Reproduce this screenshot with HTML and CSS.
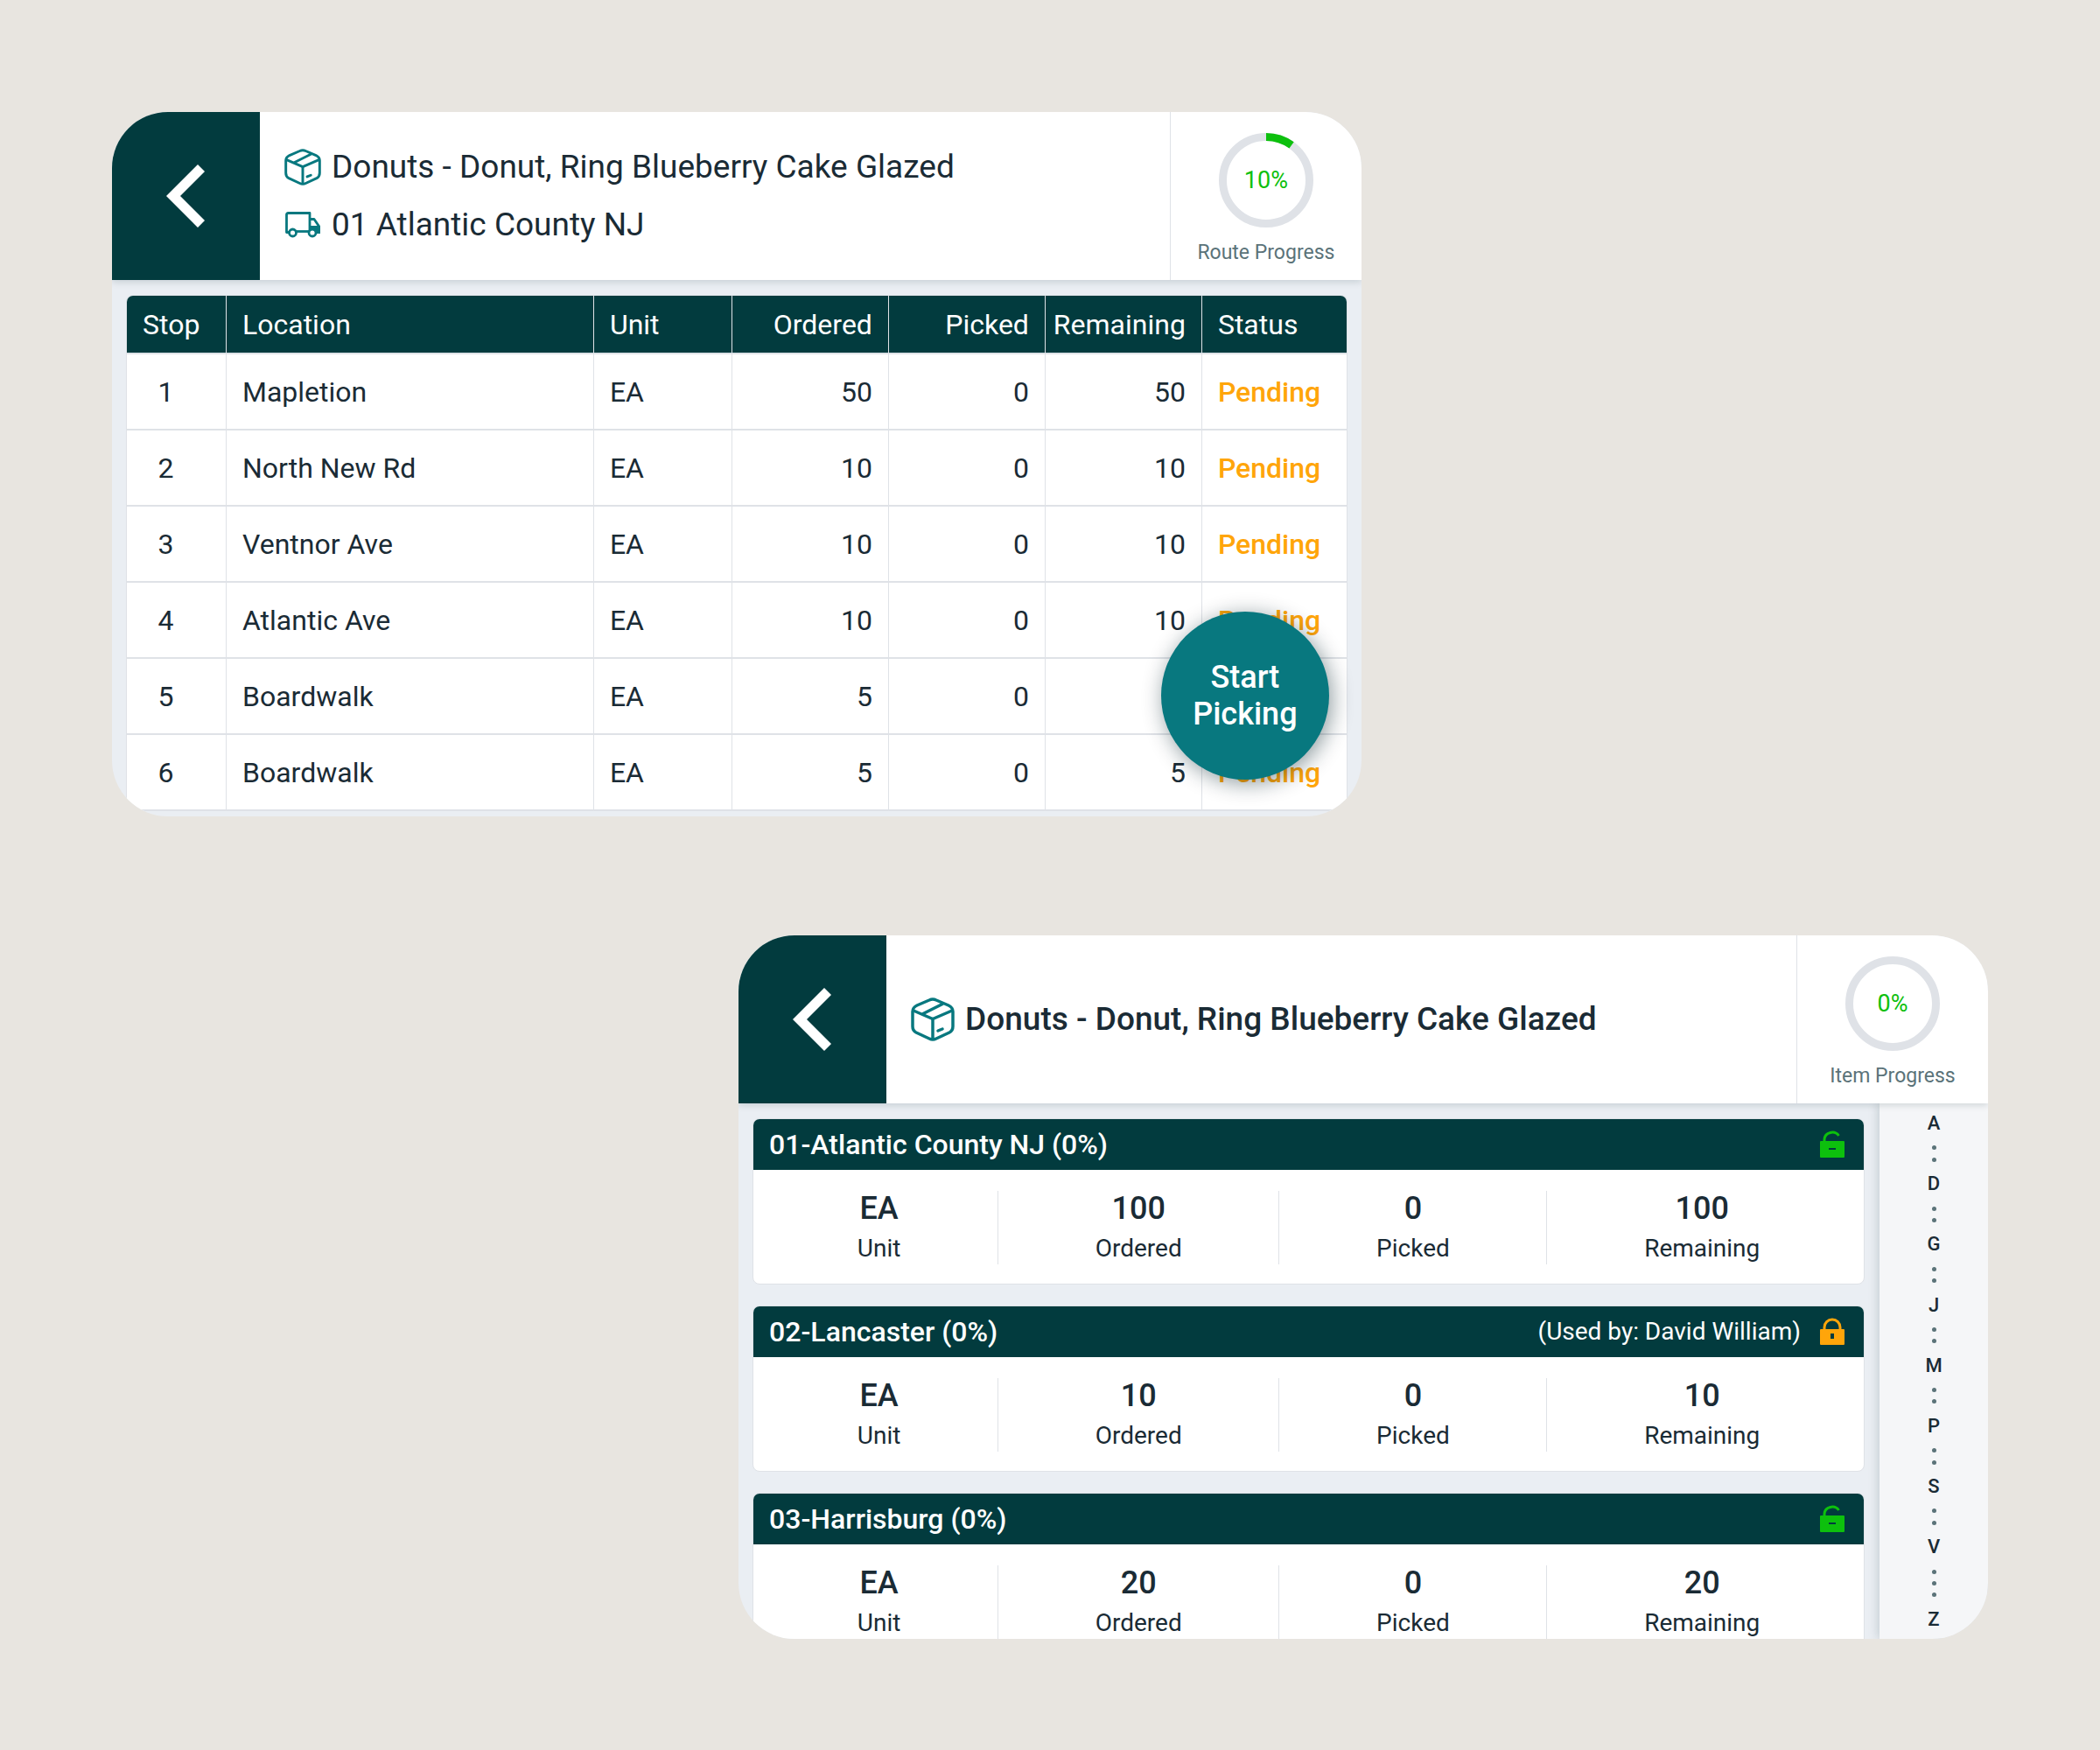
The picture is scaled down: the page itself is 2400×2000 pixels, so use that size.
FILE: index.html
```html
<!DOCTYPE html>
<html lang="en">
<head>
<meta charset="utf-8">
<meta name="viewport" content="width=device-width, initial-scale=1">
<title>Route Picking</title>
<link rel="stylesheet" href="styles.css">
</head>
<body>
<svg class="sprite" aria-hidden="true">
  <symbol id="icon-back" viewBox="0 0 46 74">
    <path d="M37 1 L45 9 L17 37 L45 65 L37 73 L1 37 Z" fill="currentColor"/>
  </symbol>
  <symbol id="icon-box" viewBox="0 0 50 50">
    <g fill="none" stroke="currentColor" stroke-width="3.500" stroke-linecap="round" stroke-linejoin="round">
      <path d="M21 3 Q25 1 29 3 L43 9 Q48 11.500 48 16 V33 Q48 38 44 40 L29 47 Q25 49 21 47 L6 40 Q2 38 2 33 V16 Q2 11.500 7 9 Z"/>
      <path d="M3 15 L25 24.500 L47 15"/>
      <path d="M25 24.500 V47"/>
      <path d="M36 7.500 L14 18.500"/>
      <path d="M31 38 L36 36"/>
    </g>
  </symbol>
  <symbol id="icon-truck" viewBox="0 0 40 30">
    <path d="M28 16 H40 V25 H28 Z" fill="currentColor"/>
    <g fill="none" stroke="currentColor" stroke-width="2.800" stroke-linejoin="round">
      <path d="M5 23.500 H1.500 V3.500 Q1.500 1.500 3.500 1.500 H28 V23"/>
      <path d="M12 22.500 H28"/>
      <path d="M28 8.500 H33 L38.500 16.500 V23"/>
      <circle cx="8.500" cy="24" r="4" fill="#fff"/>
      <circle cx="31" cy="24" r="4" fill="#fff"/>
    </g>
  </symbol>
  <symbol id="icon-unlocked" viewBox="0 0 28 32">
    <path d="M5 13 V10 A9 8.500 0 0 1 21.500 6" fill="none" stroke="currentColor" stroke-width="3"/>
    <path fill="currentColor" fill-rule="evenodd" d="M1 12 H27 Q28 12 28 13 V30 Q28 31 27 31 H1 Q0 31 0 30 V13 Q0 12 1 12 Z M10 20 V22 H18 V20 Z"/>
  </symbol>
  <symbol id="icon-locked" viewBox="0 0 28 32">
    <path d="M5 14 V11 A9 9 0 0 1 23 11 V14" fill="none" stroke="currentColor" stroke-width="3"/>
    <path fill="currentColor" fill-rule="evenodd" d="M1 13 H27 Q28 13 28 14 V30 Q28 31 27 31 H1 Q0 31 0 30 V14 Q0 13 1 13 Z M12 18 V24 H16 V18 Z"/>
  </symbol>
</svg>

<main class="board">
  <section class="screen screen-route" aria-label="Route stops">
    <header class="topbar">
      <button class="back" type="button" aria-label="Back"><svg class="icon-back"><use href="#icon-back"/></svg></button>
      <div class="heading">
        <h1 class="heading-line"><svg class="icon-small" aria-hidden="true"><use href="#icon-box"/></svg>Donuts - Donut, Ring Blueberry Cake Glazed</h1>
        <p class="heading-line"><svg class="icon-small icon-truck" aria-hidden="true"><use href="#icon-truck"/></svg>01 Atlantic County NJ</p>
      </div>
      <div class="progress">
        <div class="ring">
          <svg class="ring-track" viewBox="0 0 108 108" aria-hidden="true">
            <circle class="ring-base" cx="54" cy="54" r="49.500"/>
            <circle class="ring-value" cx="54" cy="54" r="49.500" pathLength="100" stroke-dasharray="10 90"/>
          </svg>
          <span class="ring-text">10%</span>
        </div>
        <span class="progress-label">Route Progress</span>
      </div>
    </header>
    <div class="pane">
      <div class="table-frame">
        <table class="stops">
          <colgroup><col class="c-stop"><col class="c-location"><col class="c-unit"><col class="c-qty"><col class="c-qty"><col class="c-qty"><col class="c-status"></colgroup>
          <thead>
            <tr><th scope="col">Stop</th><th scope="col">Location</th><th scope="col">Unit</th><th scope="col" class="num">Ordered</th><th scope="col" class="num">Picked</th><th scope="col" class="num">Remaining</th><th scope="col">Status</th></tr>
          </thead>
          <tbody>
            <tr><td class="stop">1</td><td>Mapletion</td><td>EA</td><td class="num">50</td><td class="num">0</td><td class="num">50</td><td class="status">Pending</td></tr>
            <tr><td class="stop">2</td><td>North New Rd</td><td>EA</td><td class="num">10</td><td class="num">0</td><td class="num">10</td><td class="status">Pending</td></tr>
            <tr><td class="stop">3</td><td>Ventnor Ave</td><td>EA</td><td class="num">10</td><td class="num">0</td><td class="num">10</td><td class="status">Pending</td></tr>
            <tr><td class="stop">4</td><td>Atlantic Ave</td><td>EA</td><td class="num">10</td><td class="num">0</td><td class="num">10</td><td class="status">Pending</td></tr>
            <tr><td class="stop">5</td><td>Boardwalk</td><td>EA</td><td class="num">5</td><td class="num">0</td><td class="num">5</td><td class="status">Pending</td></tr>
            <tr><td class="stop">6</td><td>Boardwalk</td><td>EA</td><td class="num">5</td><td class="num">0</td><td class="num">5</td><td class="status">Pending</td></tr>
          </tbody>
        </table>
      </div>
    </div>
    <button class="start" type="button">Start<br>Picking</button>
  </section>

  <section class="screen screen-item" aria-label="Item routes">
    <header class="topbar">
      <button class="back" type="button" aria-label="Back"><svg class="icon-back"><use href="#icon-back"/></svg></button>
      <div class="heading">
        <h2 class="heading-line heading-strong"><svg class="icon-large" aria-hidden="true"><use href="#icon-box"/></svg>Donuts - Donut, Ring Blueberry Cake Glazed</h2>
      </div>
      <div class="progress">
        <div class="ring">
          <svg class="ring-track" viewBox="0 0 108 108" aria-hidden="true">
            <circle class="ring-base" cx="54" cy="54" r="49.500"/>
          </svg>
          <span class="ring-text">0%</span>
        </div>
        <span class="progress-label">Item Progress</span>
      </div>
    </header>
    <div class="split">
      <div class="routes">
        <article class="route">
          <header class="route-head"><h3 class="route-name">01-Atlantic County NJ (0%)</h3><svg class="lock lock-open" role="img" aria-label="Unlocked"><use href="#icon-unlocked"/></svg></header>
          <dl class="stats">
            <div class="stat"><dt>Unit</dt><dd>EA</dd></div>
            <div class="stat"><dt>Ordered</dt><dd>100</dd></div>
            <div class="stat"><dt>Picked</dt><dd>0</dd></div>
            <div class="stat"><dt>Remaining</dt><dd>100</dd></div>
          </dl>
        </article>
        <article class="route">
          <header class="route-head"><h3 class="route-name">02-Lancaster (0%)</h3><span class="used-by">(Used by: David William)</span><svg class="lock lock-closed" role="img" aria-label="Locked"><use href="#icon-locked"/></svg></header>
          <dl class="stats">
            <div class="stat"><dt>Unit</dt><dd>EA</dd></div>
            <div class="stat"><dt>Ordered</dt><dd>10</dd></div>
            <div class="stat"><dt>Picked</dt><dd>0</dd></div>
            <div class="stat"><dt>Remaining</dt><dd>10</dd></div>
          </dl>
        </article>
        <article class="route">
          <header class="route-head"><h3 class="route-name">03-Harrisburg (0%)</h3><svg class="lock lock-open" role="img" aria-label="Unlocked"><use href="#icon-unlocked"/></svg></header>
          <dl class="stats">
            <div class="stat"><dt>Unit</dt><dd>EA</dd></div>
            <div class="stat"><dt>Ordered</dt><dd>20</dd></div>
            <div class="stat"><dt>Picked</dt><dd>0</dd></div>
            <div class="stat"><dt>Remaining</dt><dd>20</dd></div>
          </dl>
        </article>
      </div>
      <nav class="index" aria-label="Alphabet">
        <a href="#a">A</a><i></i><i></i>
        <a href="#d">D</a><i></i><i></i>
        <a href="#g">G</a><i></i><i></i>
        <a href="#j">J</a><i></i><i></i>
        <a href="#m">M</a><i></i><i></i>
        <a href="#p">P</a><i></i><i></i>
        <a href="#s">S</a><i></i><i></i>
        <a href="#v">V</a><i></i><i></i><i></i>
        <a href="#z">Z</a>
      </nav>
    </div>
  </section>
</main>
</body>
</html>
```
FILE: styles.css
```css
:root {
  --dark: #023b3e;
  --teal: #08787f;
  --ink: #1a2b35;
  --muted: #5b7379;
  --line: #dfe2e7;
  --pane: #eaeef3;
  --green: #0dc00d;
  --orange: #ffa50a;
}

* { box-sizing: border-box; }

body {
  margin: 0;
  background: #e8e5e0;
  color: var(--ink);
  font-family: Roboto, "Liberation Sans", sans-serif;
  font-size: 32px;
}

h1, h2, h3, p, dl, dd { margin: 0; font: inherit; }
button { border: 0; padding: 0; font: inherit; cursor: pointer; }
.sprite { display: none; }

.board {
  display: flex;
  flex-direction: column;
  gap: 136px;
  padding: 128px;
}

.screen {
  position: relative;
  display: flex;
  flex-direction: column;
  width: 66.6%;
  overflow: hidden;
  border-radius: 64px;
  background: var(--pane);
}
.screen-item { align-self: flex-end; max-height: 804px; }

/* Top bar */
.topbar {
  position: relative;
  z-index: 1;
  display: flex;
  flex: none;
  min-height: 192px;
  background: #fff;
  box-shadow: 0 2px 8px rgba(3, 40, 45, 0.16);
}
.back {
  display: grid;
  place-items: center;
  flex: none;
  width: 169px;
  padding-right: 2px;
  background: var(--dark);
  color: #fff;
}
.icon-back { width: 46px; height: 74px; }

.heading {
  display: flex;
  flex: 1;
  flex-direction: column;
  justify-content: center;
  gap: 24px;
  padding: 0 28px;
}
.heading-line {
  display: flex;
  align-items: center;
  gap: 12px;
  font-size: 37px;
  line-height: 42px;
}
.heading-strong { font-weight: 500; }
.icon-small { width: 42px; height: 42px; color: var(--teal); }
.icon-truck { height: 30px; }
.icon-large { width: 50px; height: 50px; color: var(--teal); }

.progress {
  display: flex;
  flex: none;
  flex-direction: column;
  align-items: center;
  gap: 14px;
  width: 219px;
  padding-top: 24px;
  border-left: 1px solid var(--line);
}
.ring { display: grid; place-items: center; width: 108px; height: 108px; }
.ring > * { grid-area: 1 / 1; }
.ring-track { width: 108px; height: 108px; transform: rotate(-90deg); }
.ring-base, .ring-value { fill: none; stroke-width: 9; stroke: var(--line); }
.ring-value { stroke: var(--green); }
.ring-text { color: var(--green); font-size: 27px; line-height: 32px; }
.progress-label { color: var(--muted); font-size: 23px; line-height: 30px; }

/* Stop table */
.pane { padding: 17px 16px 6px; }
.table-frame {
  overflow: hidden;
  border: 1px solid var(--line);
  border-bottom: 0;
  border-radius: 8px;
  background: #fff;
}
.stops {
  width: 100%;
  table-layout: fixed;
  border-spacing: 0;
  text-align: left;
  line-height: 38px;
  white-space: nowrap;
}
.c-stop { width: 114px; }
.c-unit { width: 158px; }
.c-qty { width: 179px; }
.c-status { width: 165px; }
.stops th, .stops td {
  padding: 0 18px;
  border-right: 1px solid var(--line);
  border-bottom: 2px solid var(--line);
  font-weight: 400;
}
.stops th { height: 67px; background: var(--dark); background-clip: padding-box; color: #fff; }
.stops td { height: 87px; }
.stops th:last-child, .stops td:last-child { border-right: 0; }
.stops .num { padding-left: 8px; text-align: right; }
.stops .stop { padding-right: 42px; text-align: center; }
.stops .status { color: var(--orange); font-weight: 500; }

.start {
  position: absolute;
  right: 37px;
  bottom: 42px;
  width: 192px;
  height: 192px;
  border-radius: 50%;
  background: var(--teal);
  color: #fff;
  font-size: 36px;
  font-weight: 500;
  line-height: 42px;
  box-shadow: 3px 4px 24px rgba(3, 30, 40, 0.45);
}

/* Route cards */
.split { display: flex; flex: 1; min-height: 0; }
.routes {
  display: flex;
  flex: 1;
  flex-direction: column;
  gap: 24px;
  padding: 17px 17px 0 16px;
  overflow: hidden;
}
.route {
  flex: none;
  overflow: hidden;
  border: 1px solid var(--line);
  border-radius: 8px;
  background: #fff;
}
.route-head {
  display: flex;
  align-items: center;
  gap: 22px;
  min-height: 58px;
  padding: 0 22px 0 18px;
  background: var(--dark);
  color: #fff;
}
.route-name { flex: 1; font-weight: 500; line-height: 38px; }
.used-by { font-size: 28px; line-height: 32px; }
.lock { width: 28px; height: 32px; }
.lock-open { color: var(--green); }
.lock-closed { color: var(--orange); }

.stats { display: flex; padding: 24px 8px 22px; }
.stat {
  display: flex;
  flex: 1 1 auto;
  flex-direction: column-reverse;
  gap: 8px;
  text-align: center;
}
.stat + .stat { border-left: 1px solid var(--line); }
.stat dt { font-size: 28px; line-height: 36px; }
.stat dd { font-size: 36px; font-weight: 500; line-height: 40px; }

/* Alphabet index */
.index {
  display: flex;
  flex: none;
  flex-direction: column;
  align-items: center;
  justify-content: space-between;
  width: 124px;
  padding: 6px 0 5px;
  background: #f5f6f8;
  box-shadow: 0 0 12px rgba(3, 40, 45, 0.22);
}
.index a {
  color: var(--ink);
  font-size: 22px;
  font-weight: 500;
  line-height: 34px;
  text-decoration: none;
}
.index i { width: 5px; height: 5px; border-radius: 50%; background: var(--muted); }
```
